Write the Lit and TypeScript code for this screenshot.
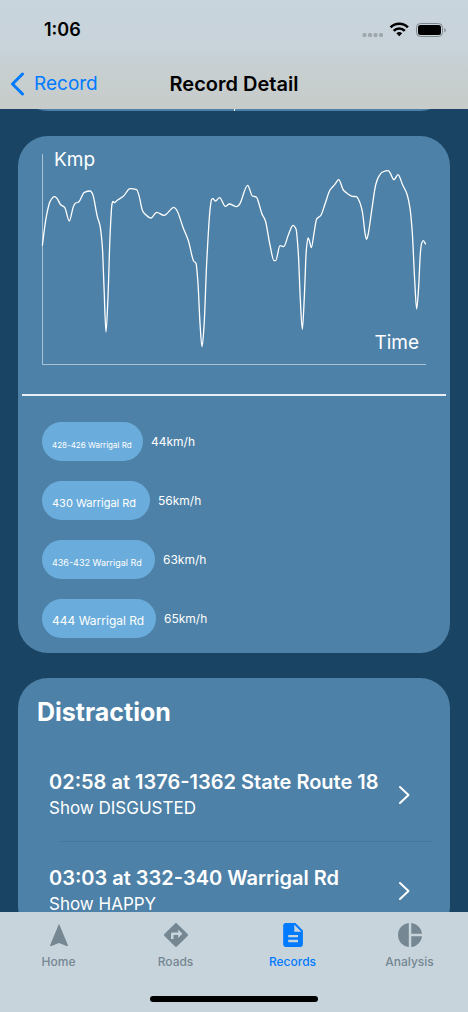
import { LitElement, html, css, svg } from "lit";
import { customElement, property } from "lit/decorators.js";
import { classMap } from "lit/directives/class-map.js";

type Point = [number, number];

const speedTrace: Point[] = [
  [1, 275], [12, 193], [24, 143], [37, 128], [44, 132], [56, 152], [68, 160], [82, 201],
  [94, 158], [100, 148], [111, 143], [127, 115], [145, 111], [152, 121], [166, 188], [174, 215],
  [181, 278], [186, 398], [192, 534], [198, 428], [204, 248], [210, 150], [213, 142], [218, 146],
  [224, 140], [244, 127], [264, 104], [284, 107], [291, 125], [302, 171], [309, 180], [327, 192],
  [344, 175], [366, 184], [396, 160], [404, 168], [424, 223], [439, 260], [455, 321], [462, 328],
  [468, 388], [474, 508], [480, 578], [486, 518], [494, 328], [504, 168], [509, 136], [513, 134],
  [520, 141], [533, 131], [550, 157], [562, 150], [584, 158], [592, 152], [617, 94], [631, 126],
  [643, 129], [649, 143], [660, 180], [670, 200], [684, 273], [696, 320], [701, 320], [714, 275],
  [725, 278], [739, 243], [753, 214], [762, 225], [769, 298], [775, 438], [781, 526], [787, 428],
  [793, 288], [798, 252], [802, 260], [808, 281], [816, 238], [824, 195], [836, 185], [849, 150],
  [864, 108], [878, 92], [890, 77], [904, 108], [914, 117], [931, 127], [943, 128], [952, 142],
  [961, 173], [970, 243], [974, 256], [978, 243], [990, 163], [1001, 93], [1010, 68], [1022, 54],
  [1039, 50], [1045, 58], [1056, 77], [1068, 62], [1082, 93], [1094, 118], [1104, 163], [1111, 238],
  [1118, 378], [1124, 465], [1130, 398], [1135, 298], [1139, 268], [1144, 260], [1151, 271],
];

/* Monotone cubic interpolation: smooth, and never overshoots a peak. */
function smoothPath(pts: Point[]): string {
  const n = pts.length;
  const slope = pts.slice(1).map(([x, y], i) => (y - pts[i][1]) / (x - pts[i][0]));
  const tangent = pts.map((_, i) => {
    if (i === 0) return slope[0];
    if (i === n - 1) return slope[n - 2];
    const a = slope[i - 1];
    const b = slope[i];
    return a * b <= 0 ? 0 : (2 * a * b) / (a + b);
  });
  let d = `M${pts[0][0]} ${pts[0][1]}`;
  for (let i = 1; i < n; i++) {
    const [x0, y0] = pts[i - 1];
    const [x1, y1] = pts[i];
    const h = (x1 - x0) / 3;
    d += `C${(x0 + h).toFixed(1)} ${(y0 + h * tangent[i - 1]).toFixed(1)} ${(x1 - h).toFixed(1)} ${(y1 - h * tangent[i]).toFixed(1)} ${x1} ${y1}`;
  }
  return d;
}

@customElement("speed-chart")
class SpeedChart extends LitElement {
  @property({ attribute: false }) points: Point[] = [];

  static styles = css`
    :host { display: grid; height: 211px; color: #fff; font-size: 19px; line-height: 24px; }
    .plot, .label { grid-area: 1 / 1; }
    .plot { width: 100%; height: 211px; display: block; overflow: visible; }
    .axis { fill: none; stroke: #a9c3d6; stroke-width: 1; vector-effect: non-scaling-stroke; }
    .trace { fill: none; stroke: #fff; stroke-width: 1.3; stroke-linejoin: round; vector-effect: non-scaling-stroke; }
    .y { place-self: start; padding-left: 12px; margin-top: -6px; }
    .x { place-self: end; padding: 0 7px 10px 0; }
  `;

  render() {
    return html`
      <svg class="plot" viewBox="0 0 1152 633" preserveAspectRatio="none" role="img" aria-label="Speed over time">
        <path class="axis" d="M1.5 0V631.5H1152" />
        <path class="trace" d=${smoothPath(this.points)} />
      </svg>
      <span class="label y">Kmp</span>
      <span class="label x">Time</span>
    `;
  }
}

const roads = [
  { name: "428-426 Warrigal Rd", speed: 44, size: "xs" },
  { name: "430 Warrigal Rd", speed: 56, size: "md" },
  { name: "436-432 Warrigal Rd", speed: 63, size: "sm" },
  { name: "444 Warrigal Rd", speed: 65, size: "lg" },
];

const events = [
  { title: "02:58 at 1376-1362 State Route 18", detail: "Show DISGUSTED" },
  { title: "03:03 at 332-340 Warrigal Rd", detail: "Show HAPPY" },
];

const tabs = [
  { label: "Home", icon: svg`<path d="M12 .8 3 22.600l.8.7L12 20l8.200 3.300.8-.7z"/>` },
  {
    label: "Roads",
    icon: svg`<path d="M23.600 11.100 12.900.4a1.270 1.270 0 0 0-1.800 0L.4 11.100a1.270 1.270 0 0 0 0 1.800l10.700 10.700c.5.5 1.300.5 1.800 0l10.700-10.700c.5-.5.5-1.300 0-1.800zM14.200 15v-3H9.500v4H7v-5.200c0-.7.500-1.300 1.200-1.300h6V6.600l4.200 4.200z"/>`,
  },
  {
    label: "Records",
    icon: svg`<path d="M14.500 0h-10A2.400 2.400 0 0 0 2.200 2.400v19.200A2.400 2.400 0 0 0 4.500 24h15a2.400 2.400 0 0 0 2.400-2.400V7.400zM17 19.200H7.200v-2.400H17zm0-4.900H7.200v-2.400H17zM13.300 8.700V1.800l7 6.900z"/>`,
  },
  {
    label: "Analysis",
    icon: svg`<path d="M10.800 0v24C4.700 23.400 0 18.300 0 12S4.700.6 10.800 0zM13.300 0v10.800H24C23.400 5.100 19 .6 13.300 0zM13.300 13.200V24C19 23.400 23.400 18.900 24 13.200z"/>`,
  },
];

@customElement("app-root")
class AppRoot extends LitElement {
  static styles = css`
    :host {
      display: flex;
      flex-direction: column;
      height: 100vh;
      overflow: hidden;
      background: #194463;
      color: #fff;
      font-family: Inter, "Liberation Sans", sans-serif;
    }
    a { color: inherit; text-decoration: none; }
    .header {
      flex: none;
      background: linear-gradient(#c9d5dd, #c7d2d9 45%, #c7cfd0 65%, #c7ccca);
      color: #000;
    }
    .status { display: flex; align-items: center; justify-content: space-between; height: 60px; padding: 0 22px 0 44px; }
    .clock { font-size: 18px; font-weight: 600; line-height: 22px; }
    .indicators { display: block; width: 84px; height: 18px; }
    .bar { display: grid; grid-template-columns: 1fr auto 1fr; align-items: center; height: 49px; padding: 0 10px 2px; box-sizing: border-box; }
    .back { display: flex; align-items: center; gap: 10px; color: #007aff; font-size: 19px; line-height: 24px; }
    .back-icon { width: 14px; height: 24px; }
    .title { margin: 0; font-size: 20px; font-weight: 600; line-height: 24px; }
    .content { flex: 1; min-height: 0; overflow: hidden; display: flex; flex-direction: column; gap: 25px; padding: 0 18px; }
    .card { flex: none; border-radius: 30px; background: #4d81a7; }
    .summary { display: flex; justify-content: center; height: 80px; margin-top: -78px; }
    .split { width: 1px; background: #fff; }
    .speed { padding: 18px 0 15px; }
    .chart { padding: 0 24px; }
    .rule { height: 2px; margin: 29px 4px 26px; border: 0; background: #e9eff4; }
    .roads { display: flex; flex-direction: column; gap: 20px; margin: 0; padding: 0 24px; list-style: none; }
    .road { display: flex; align-items: center; gap: 8px; font-size: 12px; line-height: 16px; }
    .pill {
      display: flex;
      align-items: center;
      box-sizing: border-box;
      height: 39px;
      padding: 4px 10px 0;
      border-radius: 20px;
      background: #6aacdb;
      white-space: nowrap;
    }
    .xs { font-size: 8px; padding-top: 6px; }
    .sm { font-size: 9px; padding-top: 6px; }
    .md { font-size: 11px; }
    .lg { font-size: 12px; }
    .section { margin: 0; padding: 18px 19px 0; font-size: 25px; font-weight: 700; line-height: 32px; }
    .events { margin: 0; padding: 21px 0 0; list-style: none; }
    .event { display: flex; align-items: center; justify-content: space-between; height: 91px; padding: 0 39px 0 31px; }
    .event-title { display: block; font-size: 20px; font-weight: 600; line-height: 26px; white-space: nowrap; }
    .event-detail { display: block; font-size: 17px; line-height: 26px; }
    .chevron { flex: none; width: 14px; height: 20px; }
    .separator { height: 1px; margin: 1px 18px 3px 42px; background: #45779f; }
    .tabbar { flex: none; height: 100px; box-sizing: border-box; display: flex; flex-direction: column; justify-content: space-between; align-items: center; padding-bottom: 10px; background: #c8d4dc; }
    .tabs { display: flex; align-self: stretch; padding-top: 11px; }
    .tab { flex: 1; display: flex; flex-direction: column; align-items: center; gap: 7px; color: #748792; font-size: 12px; font-weight: 500; line-height: 16px; }
    .tab.active { color: #007aff; }
    .tab-icon { width: 24px; height: 24px; fill: currentColor; }
    .home-indicator { width: 36%; height: 6px; border-radius: 3px; background: #000; }
  `;

  render() {
    return html`
      <header class="header">
        <div class="status">
          <span class="clock">1:06</span>
          <svg class="indicators" viewBox="0 0 84 18" aria-hidden="true">
            <g fill="#9fa6ac">
              <rect x="0.500" y="12" width="4" height="4" rx="1.500" />
              <rect x="6" y="12" width="4" height="4" rx="1.500" />
              <rect x="11.500" y="12" width="4" height="4" rx="1.500" />
              <rect x="17" y="12" width="4" height="4" rx="1.500" />
            </g>
            <g fill="none" stroke="#000" stroke-width="2.600">
              <path d="M28.600 6.300a12.200 12.200 0 0 1 17.300 0" />
              <path d="M31.700 9.800a7.800 7.800 0 0 1 11.100 0" />
            </g>
            <path d="M34.300 12.300a4.300 4.300 0 0 1 5.900 0l-2.950 3z" />
            <rect x="54.500" y="2.500" width="26" height="13" rx="4" fill="none" stroke="#7f878c" />
            <rect x="56" y="4" width="23" height="10" rx="2.500" />
            <path d="M82.300 7v4.500c2-.8 2-3.700 0-4.500z" fill="#7f878c" />
          </svg>
        </div>
        <div class="bar">
          <a class="back" href="#records">
            <svg class="back-icon" viewBox="0 0 14 24" aria-hidden="true">
              <path d="M12.500 2 2.500 12l10 10" fill="none" stroke="currentColor" stroke-width="3" stroke-linecap="round" stroke-linejoin="round" />
            </svg>
            Record
          </a>
          <h1 class="title">Record Detail</h1>
        </div>
      </header>

      <main class="content">
        <div class="card summary"><div class="split"></div></div>

        <section class="card speed">
          <div class="chart"><speed-chart .points=${speedTrace}></speed-chart></div>
          <hr class="rule" />
          <ul class="roads">
            ${roads.map(
              (r) => html`
                <li class="road">
                  <span class="pill ${r.size}" style="width:${Math.round(73 + r.speed * 0.63)}px">${r.name}</span>
                  <span>${r.speed}km/h</span>
                </li>
              `
            )}
          </ul>
        </section>

        <section class="card">
          <h2 class="section">Distraction</h2>
          <ul class="events">
            ${events.map(
              (e, i) => html`
                <li>
                  ${i > 0 ? html`<div class="separator"></div>` : null}
                  <a class="event" href="#event-${i}">
                    <span>
                      <span class="event-title">${e.title}</span>
                      <span class="event-detail">${e.detail}</span>
                    </span>
                    <svg class="chevron" viewBox="0 0 14 20" aria-hidden="true">
                      <path d="M3 2l8.500 8L3 18" fill="none" stroke="#fff" stroke-width="2" stroke-linecap="round" stroke-linejoin="round" />
                    </svg>
                  </a>
                </li>
              `
            )}
          </ul>
        </section>
      </main>

      <footer class="tabbar">
        <nav class="tabs">
          ${tabs.map(
            (t) => html`
              <a class=${classMap({ tab: true, active: t.label === "Records" })} href="#${t.label.toLowerCase()}">
                <svg class="tab-icon" viewBox="0 0 24 24" aria-hidden="true">${t.icon}</svg>
                ${t.label}
              </a>
            `
          )}
        </nav>
        <div class="home-indicator"></div>
      </footer>
    `;
  }
}
